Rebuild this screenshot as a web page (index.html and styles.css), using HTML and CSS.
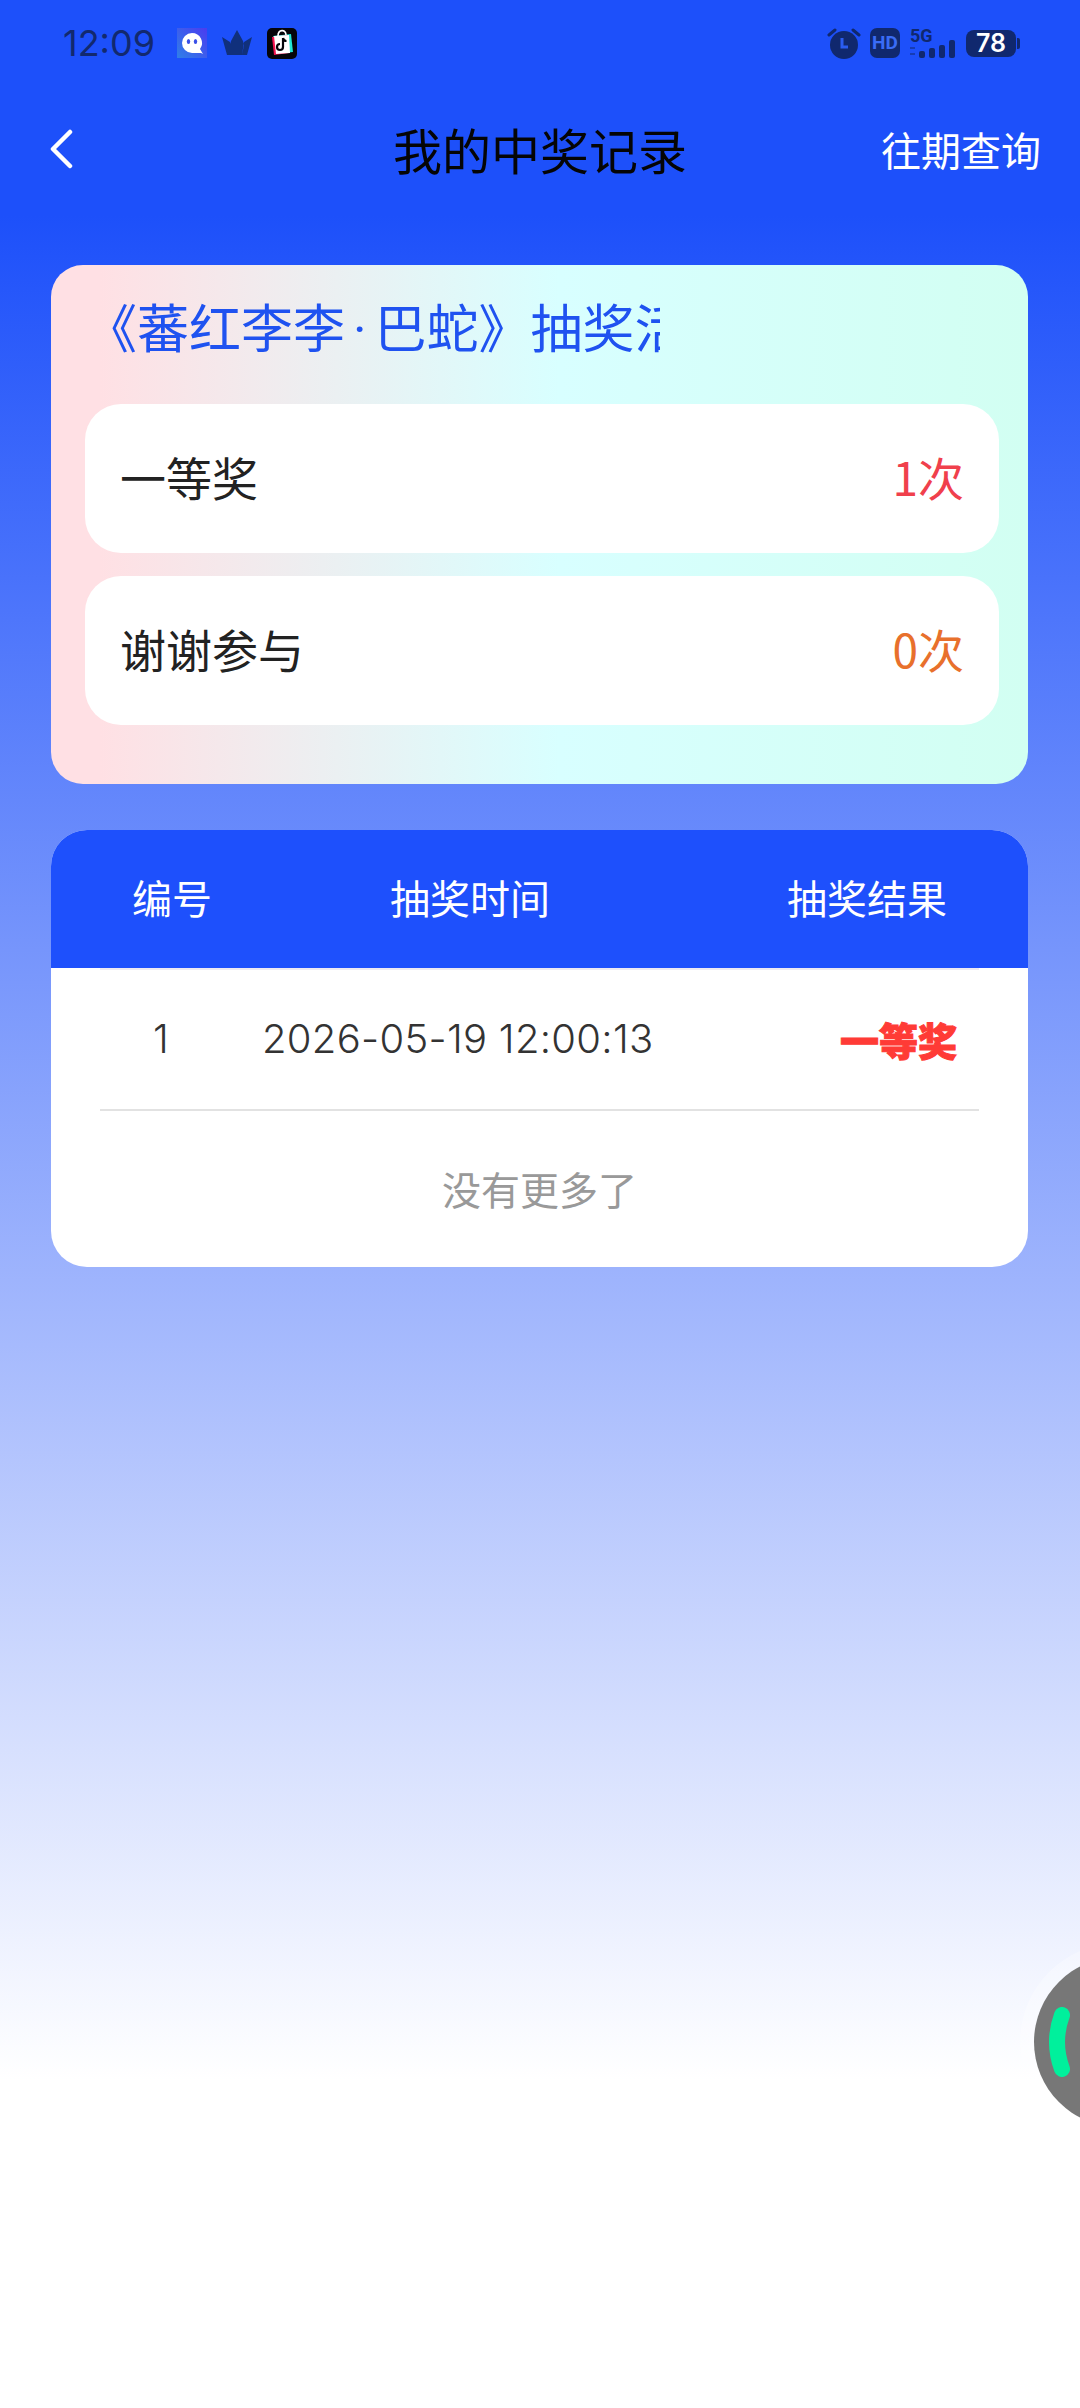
FILE: index.html
```html
<!DOCTYPE html>
<html lang="zh-CN">
<head>
    <meta charset="UTF-8">
    <meta name="viewport" content="width=device-width, initial-scale=1.0">
    <title>我的中奖记录</title>
    <link rel="stylesheet" href="styles.css">
</head>
<body>
    <div class="page">
        <div class="status-bar">
            <div class="status-left">
                <span class="time">12:09</span>
                <svg class="icon-ghost" width="30" height="30" viewBox="0 0 30 30">
                    <defs>
                        <linearGradient id="ghostBg" x1="0" y1="1" x2="1" y2="0">
                            <stop offset="0" stop-color="#2f7fe8"/>
                            <stop offset="1" stop-color="#4a3cf0"/>
                        </linearGradient>
                    </defs>
                    <rect width="30" height="30" fill="url(#ghostBg)"/>
                    <path d="M15 5a10 10 0 1 0 0 20h9l2 1-3-5a10 10 0 0 0-8-16z" fill="#fff"/>
                    <ellipse cx="11.5" cy="13.5" rx="1.7" ry="2.6" fill="#3a50e8"/>
                    <ellipse cx="18.5" cy="13.5" rx="1.7" ry="2.6" fill="#3a50e8"/>
                </svg>
                <svg class="icon-crown" width="30" height="28" viewBox="0 0 30 28">
                    <path d="M15 1l6 11 1 4-2 10H10L8 16l1-4z M0 8l8 5 2 13H5z M30 8l-8 5-2 13h5z" fill="#10307c"/>
                </svg>
                <svg class="icon-shop" width="30" height="31" viewBox="0 0 30 31">
                    <rect width="30" height="31" rx="5" fill="#05050a"/>
                    <path d="M6 8l18-2 2 18-18 2z" fill="#21e6d6"/>
                    <path d="M5 9l16-2 1 18-15 2z" fill="#f5124f"/>
                    <path d="M7 8l15-1 1 18-14 1z" fill="#fff"/>
                    <path d="M11 8c0-7 8-7 8-1" fill="none" stroke="#fff" stroke-width="1.6"/>
                    <path d="M16 10v9a3 3 0 1 1-3-3M16 10c.4 2 2 3 3.5 3" fill="none" stroke="#05050a" stroke-width="2.2"/>
                </svg>
            </div>
            <div class="status-right">
                <svg width="34" height="31" viewBox="0 0 34 31">
                    <circle cx="17" cy="17" r="14" fill="#10286e"/>
                    <path d="M2 7l6-5M32 7l-6-5" stroke="#10286e" stroke-width="3" stroke-linecap="round"/>
                    <path d="M15 10v9h6" fill="none" stroke="#2a5cf0" stroke-width="3"/>
                </svg>
                <span class="hd">HD</span>
                <svg class="signal" width="46" height="32" viewBox="0 0 46 32">
                    <text class="five-g" x="0" y="15">5G</text>
                    <rect x="0" y="20" width="5" height="2" fill="#10286e" opacity=".5"/>
                    <rect x="0" y="26" width="5" height="2" fill="#10286e" opacity=".5"/>
                    <rect x="9" y="24" width="6" height="7" rx="2" fill="#10286e"/>
                    <rect x="19" y="21" width="6" height="10" rx="2" fill="#10286e"/>
                    <rect x="29" y="18" width="6" height="13" rx="2" fill="#10286e"/>
                    <rect x="39" y="13" width="6" height="18" rx="2" fill="#10286e"/>
                </svg>
                <div class="battery"><span class="battery-level">78</span></div>
            </div>
        </div>

        <div class="nav">
            <svg class="back" width="24" height="42" viewBox="0 0 24 42">
                <path d="M21 4L4 21l17 17" fill="none" stroke="#fff" stroke-width="4.5" stroke-linecap="round" stroke-linejoin="round"/>
            </svg>
            <h1 class="nav-title">我的中奖记录</h1>
            <a class="nav-link">往期查询</a>
        </div>

        <div class="content">
            <div class="summary">
                <div class="summary-title">《蕃红李李<span class="dot">·</span>巴蛇》抽奖活动记录</div>
                <div class="summary-row">
                    <span>一等奖</span>
                    <span class="count-red">1次</span>
                </div>
                <div class="summary-row">
                    <span>谢谢参与</span>
                    <span class="count-orange">0次</span>
                </div>
            </div>

            <div class="records">
                <div class="records-head">
                    <span class="head-no">编号</span>
                    <span class="head-time">抽奖时间</span>
                    <span class="head-result">抽奖结果</span>
                </div>
                <div class="record-row">
                    <span class="cell-no">1</span>
                    <span class="cell-time">2026-05-19 12:00:13</span>
                    <span class="cell-result">一等奖</span>
                </div>
                <div class="no-more">没有更多了</div>
            </div>
        </div>

        <div class="float-ball">
            <svg class="float-arc" width="40" height="70" viewBox="0 0 40 70">
                <path d="M27 8Q17 35 27 62" fill="none" stroke="#00f09c" stroke-width="16" stroke-linecap="round"/>
            </svg>
        </div>
    </div>
</body>
</html>
```

FILE: styles.css
```css
* {
    box-sizing: border-box;
}

body {
    margin: 0;
    font-family: "Noto Sans CJK SC", "Noto Sans", sans-serif;
    color: #222;
}

.page {
    position: relative;
    width: 1080px;
    height: 2408px;
    overflow: hidden;
    background: linear-gradient(180deg, #1d50fa 0, #1d50fa 215px, #fff 2080px);
}

.status-bar {
    height: 86px;
    padding: 0 60px 0 63px;
    display: flex;
    justify-content: space-between;
    align-items: center;
}

.status-left, .status-right {
    display: flex;
    align-items: center;
}

.status-left svg {
    margin-left: 15px;
}

.status-left .icon-ghost {
    margin-left: 22px;
}

.status-right {
    gap: 9px;
}

.signal {
    margin-left: 1px;
}

.time {
    font-family: Inter, sans-serif;
    font-size: 36px;
    color: #12296e;
}

.hd {
    width: 30px;
    height: 30px;
    border-radius: 7px;
    background: #10286e;
    color: #3a6cf5;
    font-family: Roboto, sans-serif;
    font-size: 19px;
    font-weight: 700;
    line-height: 30px;
    text-align: center;
}

.five-g {
    font-family: Roboto, sans-serif;
    font-size: 18px;
    font-weight: 700;
    fill: #10286e;
}

.battery {
    position: relative;
    width: 50px;
    height: 27px;
    margin-left: 1px;
    margin-right: 4px;
    border-radius: 8px;
    background: #10286e;
    color: #fff;
    font-family: Inter, sans-serif;
    font-size: 25px;
    font-weight: 600;
    line-height: 27px;
    text-align: center;
}

.battery::after {
    content: "";
    position: absolute;
    right: -4px;
    top: 8px;
    width: 3px;
    height: 11px;
    border-radius: 0 2px 2px 0;
    background: #10286e;
}

.nav {
    position: relative;
    height: 130px;
    padding: 0 39px 5px 49px;
    display: flex;
    justify-content: space-between;
    align-items: center;
}

.nav-title {
    position: absolute;
    left: 0;
    right: 0;
    margin: 0;
    font-size: 49px;
    font-weight: 400;
    color: #050505;
    text-align: center;
}

.nav-link {
    font-size: 40px;
    color: #fff;
}

.content {
    padding: 49px 52px 0 51px;
}

.summary {
    height: 519px;
    padding: 22px 29px 0 34px;
    border-radius: 32px;
    background: linear-gradient(90deg, #ffe0e4 0, #ffe0e4 5%, #d8ffff 52%, #d2fff2 100%);
}

.summary-title {
    width: 575px;
    height: 117px;
    overflow: hidden;
    white-space: nowrap;
    font-size: 52px;
    line-height: 78px;
    color: #1f52f0;
}

.dot {
    margin: 0 8px;
    font-family: Roboto, sans-serif;
}

.summary-row {
    height: 149px;
    margin-bottom: 23px;
    padding: 0 35px 6px 35px;
    border-radius: 36px;
    background: #fff;
    display: flex;
    justify-content: space-between;
    align-items: center;
    font-size: 46px;
}

.count-red {
    color: #f0404c;
}

.count-orange {
    color: #e8702c;
}

.records {
    height: 437px;
    margin-top: 46px;
    border-radius: 36px;
    background: #fff;
    overflow: hidden;
}

.records-head {
    height: 138px;
    padding: 0 0 5px 81px;
    background: #1e50fc;
    color: #fff;
    font-size: 40px;
    display: flex;
    align-items: center;
}

.head-no {
    width: 80px;
}

.head-time {
    margin-left: 178px;
}

.head-result {
    margin-left: auto;
    margin-right: 81px;
}

.record-row {
    height: 143px;
    margin: 0 49px;
    padding-bottom: 2px;
    border-top: 2px solid #eeeaf2;
    border-bottom: 2px solid #e2e2e2;
    display: flex;
    align-items: center;
    font-family: Inter, sans-serif;
    font-size: 40px;
    font-weight: 300;
    color: #333;
}

.cell-no {
    width: 162px;
    padding-left: 53px;
}

.cell-time {
    letter-spacing: 0.3px;
}

.cell-result {
    margin-left: auto;
    margin-right: 22px;
    font-family: "Noto Sans CJK SC", sans-serif;
    font-size: 39px;
    font-weight: 900;
    color: #ff3b36;
    -webkit-text-stroke: 1px #ff3b36;
}

.no-more {
    height: 156px;
    font-size: 39px;
    line-height: 154px;
    color: #999;
    text-align: center;
}

/* floating ball stuck on the right edge */
.float-ball {
    position: absolute;
    left: 1034px;
    top: 1957px;
    width: 170px;
    height: 170px;
    border-radius: 50%;
    background: #777;
    box-shadow: 0 0 0 14px rgba(255, 255, 255, 0.3);
}

.float-arc {
    position: absolute;
    left: 1px;
    top: 50px;
}
```
